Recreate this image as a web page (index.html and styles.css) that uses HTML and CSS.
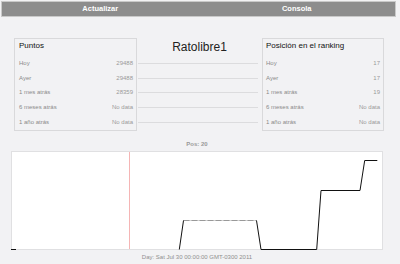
FILE: index.html
```html
<!DOCTYPE html>
<html>
<head>
<meta charset="utf-8">
<link rel="stylesheet" href="styles.css">
</head>
<body>
<nav class="topbar">
  <div class="btn">Actualizar</div>
  <div class="btn">Consola</div>
</nav>
<section class="stats">
  <div class="panel panel-left">
    <div class="panel-title">Puntos</div>
    <div class="row"><span class="lbl">Hoy</span><span class="val">29488</span></div>
    <div class="row"><span class="lbl">Ayer</span><span class="val">29488</span></div>
    <div class="row"><span class="lbl">1 mes atrás</span><span class="val">28359</span></div>
    <div class="row"><span class="lbl">6 meses atrás</span><span class="val">No data</span></div>
    <div class="row"><span class="lbl">1 año atrás</span><span class="val">No data</span></div>
  </div>
  <div class="middle">
    <div class="user">Ratolibre1</div>
    <div class="link"><span></span></div>
    <div class="link"><span></span></div>
    <div class="link"><span></span></div>
    <div class="link"><span></span></div>
    <div class="link"><span></span></div>
  </div>
  <div class="panel panel-right">
    <div class="panel-title">Posición en el ranking</div>
    <div class="row"><span class="lbl">Hoy</span><span class="val">17</span></div>
    <div class="row"><span class="lbl">Ayer</span><span class="val">17</span></div>
    <div class="row"><span class="lbl">1 mes atrás</span><span class="val">19</span></div>
    <div class="row"><span class="lbl">6 meses atrás</span><span class="val">No data</span></div>
    <div class="row"><span class="lbl">1 año atrás</span><span class="val">No data</span></div>
  </div>
</section>
<section class="graph">
  <div class="caption caption-top">Pos: 20</div>
  <div class="chart">
    <svg class="plot" width="370" height="97" viewBox="0 0 370 97">
      <line x1="117.5" y1="0" x2="117.5" y2="97" stroke="#f5b5b5" stroke-width="1"/>
      <line x1="-1" y1="97.5" x2="4" y2="97.5" stroke="#111" stroke-width="1"/>
      <line x1="171.5" y1="68.5" x2="244.5" y2="68.5" stroke="#d4d4d4" stroke-width="1.2"/>
      <line x1="171.5" y1="68.5" x2="244.5" y2="68.5" stroke="#999" stroke-width="1.2" stroke-dasharray="6 2"/>
      <polyline points="167.3,97.5 171.5,68.5" fill="none" stroke="#111" stroke-width="1"/>
      <polyline points="244.5,68.5 249,97.5 304.7,97.5 309,38.5 348,38.5 352.7,8.5 365.3,8.5" fill="none" stroke="#111" stroke-width="1"/>
    </svg>
  </div>
  <div class="caption caption-bottom">Day: Sat Jul 30 00:00:00 GMT-0300 2011</div>
</section>
</body>
</html>
```
FILE: styles.css
```css
html, body {
  margin: 0;
  padding: 0;
  background: #f2f2f4;
  font-family: "Liberation Sans", Arial, sans-serif;
  overflow: hidden;
}

.topbar {
  display: flex;
  margin: 1px 4px 0 1px;
  height: 16px;
  box-sizing: border-box;
  border: 1px solid #c9c9c9;
  background: #8d8d8d;
}

.btn {
  flex: 1;
  color: #fff;
  font-weight: bold;
  font-size: 7.5px;
  line-height: 14px;
  text-align: center;
}

.stats {
  display: flex;
  margin-top: 21px;
  padding-left: 14px;
}

.panel {
  box-sizing: border-box;
  height: 93px;
  border: 1px solid #d9d9db;
  padding-top: 1px;
}

.panel-left {
  width: 123px;
  padding-left: 4px;
  padding-right: 3px;
}

.panel-right {
  width: 122px;
  padding-left: 3px;
  padding-right: 3px;
}

.panel-title {
  font-size: 8px;
  line-height: 12px;
  color: #111;
  margin-bottom: 3.5px;
}

.row {
  display: flex;
  justify-content: space-between;
  align-items: center;
  height: 14.8px;
  font-size: 6px;
}

.lbl {
  color: #8a8a8a;
}

.val {
  color: #9a9a9a;
}

.middle {
  width: 125px;
  height: 93px;
  padding-top: 3px;
  box-sizing: border-box;
}

.user {
  font-size: 12px;
  line-height: 12px;
  color: #222;
  text-align: center;
  margin-bottom: 2.5px;
}

.link {
  display: flex;
  align-items: center;
  height: 14.8px;
  padding: 0 4px 0 1px;
}

.link span {
  flex: 1;
  height: 1px;
  margin-top: 1px;
  background: #dcdcde;
}

.graph {
  margin-left: 11px;
  width: 372px;
}

.caption {
  font-size: 6px;
  line-height: 8px;
  color: #999;
  text-align: center;
}

.caption-top {
  margin-top: 9px;
  margin-bottom: 3px;
  font-weight: bold;
}

.caption-bottom {
  margin-top: 3px;
  color: #8f8f8f;
}

.chart {
  box-sizing: border-box;
  height: 99px;
  border: 1px solid #e0e0e2;
  background: #fff;
}

.plot {
  display: block;
  overflow: visible;
}
```
